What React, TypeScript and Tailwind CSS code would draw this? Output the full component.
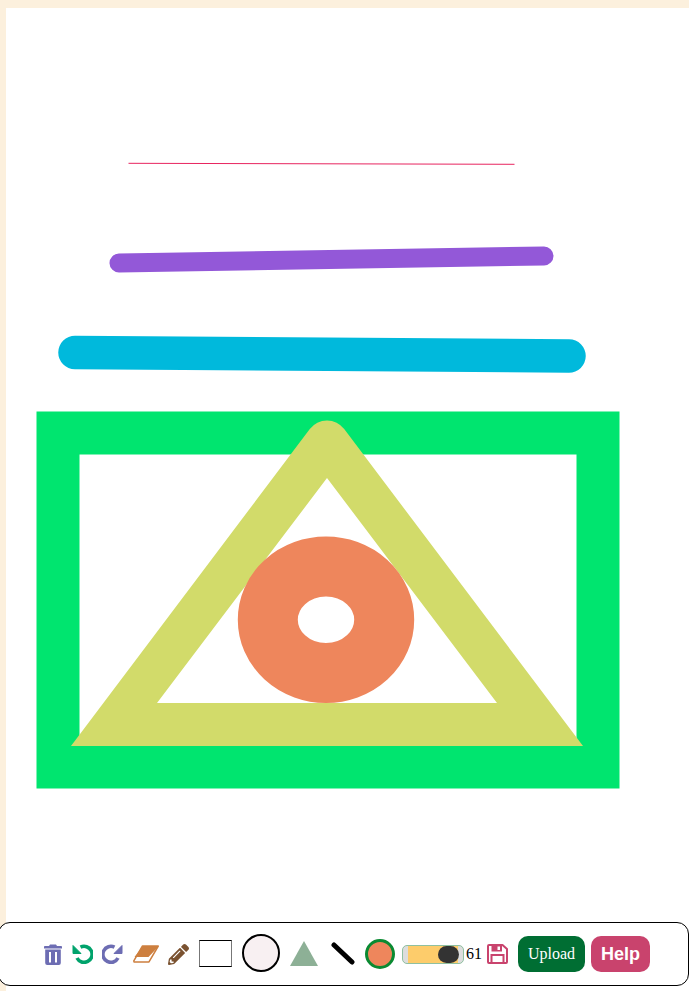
import { FaPencilAlt } from "react-icons/fa";

const UndoIcon = ({ color, flip }: { color: string; flip?: boolean }) => (
  <svg width="21" height="20" viewBox="0 0 21 20" className={flip ? "ml-[9px] -scale-x-100" : "ml-[10px]"}>
    <path d="M8.5 3.2 A8 8 0 1 1 5 14" fill="none" stroke={color} strokeWidth="3.6" />
    <path d="M1 1.5 L1 9.5 L9 9.5 Z" fill={color} stroke={color} strokeWidth="1" strokeLinejoin="round" />
  </svg>
);

const App = () => {
  return (
    <div className="flex h-[991px] flex-col bg-[#fcf0dd] pl-[6px] pt-[8px] font-['Liberation_Serif',serif]">
      <div className="relative flex-1 bg-white">
        <svg width="683" height="983" className="absolute left-0 top-0">
          <g transform="translate(-6 -8)">
            <line x1="128.5" y1="163.3" x2="514.5" y2="164.3" stroke="#e8245f" strokeWidth="1" />
            <line x1="119" y1="263" x2="544" y2="256" stroke="#9358d8" strokeWidth="19" strokeLinecap="round" />
            <line x1="75" y1="352.5" x2="569" y2="356" stroke="#00b9dc" strokeWidth="33.5" strokeLinecap="round" />
            <rect x="58" y="433" width="540" height="334" fill="none" stroke="#00e56f" strokeWidth="43" />
            <path
              fillRule="evenodd"
              d="M71 746 L309.8 429 A21.5 21.5 0 0 1 344.2 429 L583 746 Z M327 478 L157 703 L497 703 Z"
              fill="#d2db6a"
            />
            <ellipse cx="326" cy="619.7" rx="58.2" ry="53.3" fill="none" stroke="#ee865c" strokeWidth="60" />
          </g>
        </svg>
      </div>
      <div className="absolute -left-[2px] top-[922px] flex h-[64px] w-[691px] items-center justify-center rounded-[12px] border border-black bg-white pl-[7px]">
        <svg width="18" height="21" viewBox="0 0 18 21" fill="#6d6db3">
          <path d="M6 0.5 H12 L13 2 H17.2 Q18 2 18 3 V4.5 H0 V3 Q0 2 0.8 2 H5 Z" />
          <path
            fillRule="evenodd"
            d="M1.2 5.5 H16.8 V19 Q16.8 21 14.8 21 H3.2 Q1.2 21 1.2 19 Z M5 8 V18.5 H7 V8 Z M11 8 V18.5 H13 V8 Z"
          />
        </svg>
        <UndoIcon color="#00a36c" />
        <UndoIcon color="#6d6db3" flip />
        <svg width="26" height="18" viewBox="0 0 26 18" className="ml-[10px]">
          <path d="M10 1 L25 1 L25 2 L15.5 12 L1.5 12 Z" fill="#cd7f3f" />
          <path
            d="M9.5 1 L25.3 1 L16 16.8 Q15.6 17 15 17 L1 17 L0.8 15.8 Z"
            fill="none"
            stroke="#cd7f3f"
            strokeWidth="1.5"
            strokeLinejoin="round"
          />
        </svg>
        <FaPencilAlt size={21} color="#7a5230" className="ml-[9px]" />
        <div className="mb-[2px] ml-[10px] h-[27px] w-[33px] border border-x-[#777777] border-y-black bg-white" />
        <div className="mb-[3px] ml-[10px] h-[38px] w-[38px] rounded-full border-2 border-black bg-[#f8f0f2]" />
        <svg width="30" height="27" viewBox="0 0 30 27" className="mb-[2px] ml-[9px]">
          <path d="M15 1 L29 26 L1 26 Z" fill="#8db096" />
        </svg>
        <svg width="24" height="24" viewBox="0 0 24 24" className="ml-[12px]">
          <line x1="3" y1="3" x2="21" y2="20" stroke="#000" strokeWidth="5" strokeLinecap="round" />
        </svg>
        <div className="ml-[10px] h-[30px] w-[30px] rounded-full border-[3px] border-[#0a8a32] bg-[#ee865c]" />
        <div className="relative ml-[7px] h-[19px] w-[62px] rounded-[5px] border border-[#8fc0a0] bg-[#dddddd] px-[5px]">
          <div className="h-full w-full bg-[#fdcc6b]" />
          <div className="absolute right-[4px] top-0 h-[17px] w-[21px] rounded-full bg-[#333333]" />
        </div>
        <span className="ml-[2px] text-[16px] text-black">61</span>
        <svg width="21" height="20" viewBox="0 0 21 20" className="ml-[5px]">
          <path
            d="M1 2 Q1 1 2 1 H15.5 L20 5 V18 Q20 19 19 19 H2 Q1 19 1 18 Z"
            fill="none"
            stroke="#c9436d"
            strokeWidth="2"
            strokeLinejoin="round"
          />
          <path fillRule="evenodd" d="M4.5 1 H15 V7.5 H4.5 Z M10.5 2.5 V6 H13 V2.5 Z" fill="#c9436d" />
          <rect x="4.5" y="11" width="12" height="8" fill="none" stroke="#c9436d" strokeWidth="2" />
        </svg>
        <div className="ml-[10px] flex h-[36px] w-[67px] items-center justify-center rounded-[10px] bg-[#006e33] text-[16px] text-white">
          Upload
        </div>
        <div className="ml-[6px] flex h-[36px] w-[59px] items-center justify-center rounded-[10px] bg-[#c9436d] font-['Liberation_Sans',sans-serif] text-[18px] font-bold text-white">
          Help
        </div>
      </div>
    </div>
  );
};

export default App;
